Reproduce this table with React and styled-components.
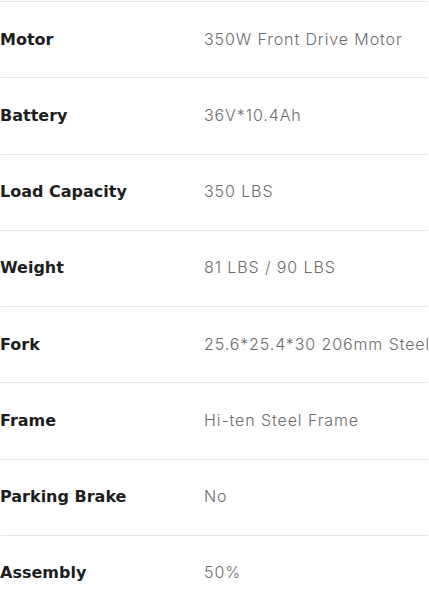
import React from 'react';
import styled, { createGlobalStyle } from 'styled-components';

const specs = [
  ['Motor', '350W Front Drive Motor'],
  ['Battery', '36V*10.4Ah'],
  ['Load Capacity', '350 LBS'],
  ['Weight', '81 LBS / 90 LBS'],
  ['Fork', '25.6*25.4*30 206mm Steel'],
  ['Frame', 'Hi-ten Steel Frame'],
  ['Parking Brake', 'No'],
  ['Assembly', '50%'],
];

const GlobalStyle = createGlobalStyle`
  html, body {
    margin: 0;
    padding: 0;
    background: #fff;
    overflow: hidden;
  }
  body {
    font-family: "Inter", "Open Sans", sans-serif;
  }
`;

const SpecTable = styled.div`
  margin: 1px 0 0 1px;
  width: 427px;
  border-top: 1px solid #e6e6e6;
`;

const Row = styled.div`
  box-sizing: border-box;
  height: 76.25px;
  padding-bottom: 2px;
  display: grid;
  grid-template-columns: 203px 1fr;
  align-items: center;
  border-bottom: 1px solid #e6e6e6;
  white-space: nowrap;
`;

const Label = styled.div`
  margin-left: -1px;
  padding-top: 1px;
  font-family: "DejaVu Sans", "Inter", sans-serif;
  font-size: 16px;
  font-weight: 700;
  color: #1e1e1e;
`;

const Value = styled.div`
  font-size: 16px;
  font-weight: 300;
  letter-spacing: 0.9px;
  color: #6c6c6c;
  overflow: hidden;
`;

const App = () => {
  return (
    <>
      <GlobalStyle />
      <SpecTable>
        {specs.map(([label, value]) => (
          <Row key={label}>
            <Label>{label}</Label>
            <Value>{value}</Value>
          </Row>
        ))}
      </SpecTable>
    </>
  );
};

export default App;
